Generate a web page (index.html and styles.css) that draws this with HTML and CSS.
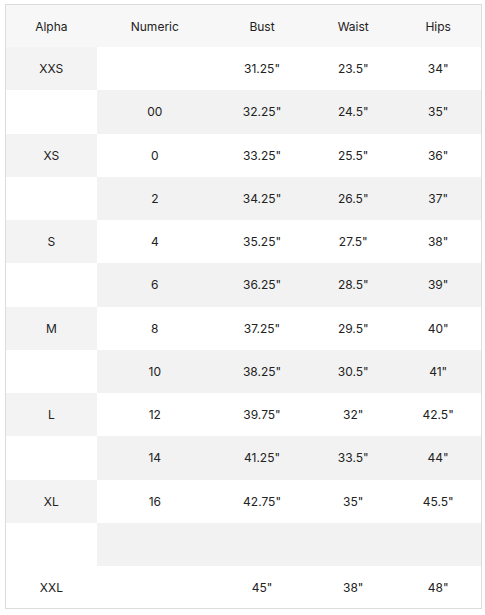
FILE: index.html
```html
<!DOCTYPE html>
<html>
<head>
<meta charset="utf-8">
<link rel="stylesheet" href="styles.css">
</head>
<body>
<div class="wrap">
<table class="size-table">
  <colgroup>
    <col class="c-alpha"><col class="c-num"><col class="c-bust"><col class="c-waist"><col class="c-hips">
  </colgroup>
  <thead>
    <tr class="head"><th>Alpha</th><th>Numeric</th><th>Bust</th><th>Waist</th><th>Hips</th></tr>
  </thead>
  <tbody>
    <tr><td class="g">XXS</td><td></td><td>31.25"</td><td>23.5"</td><td>34"</td></tr>
    <tr class="alt"><td class="w"></td><td>00</td><td>32.25"</td><td>24.5"</td><td>35"</td></tr>
    <tr><td class="g">XS</td><td>0</td><td>33.25"</td><td>25.5"</td><td>36"</td></tr>
    <tr class="alt"><td class="w"></td><td>2</td><td>34.25"</td><td>26.5"</td><td>37"</td></tr>
    <tr><td class="g">S</td><td>4</td><td>35.25"</td><td>27.5"</td><td>38"</td></tr>
    <tr class="alt"><td class="w"></td><td>6</td><td>36.25"</td><td>28.5"</td><td>39"</td></tr>
    <tr><td class="g">M</td><td>8</td><td>37.25"</td><td>29.5"</td><td>40"</td></tr>
    <tr class="alt"><td class="w"></td><td>10</td><td>38.25"</td><td>30.5"</td><td>41"</td></tr>
    <tr><td class="g">L</td><td>12</td><td>39.75"</td><td>32"</td><td>42.5"</td></tr>
    <tr class="alt"><td class="w"></td><td>14</td><td>41.25"</td><td>33.5"</td><td>44"</td></tr>
    <tr><td class="g">XL</td><td>16</td><td>42.75"</td><td>35"</td><td>45.5"</td></tr>
    <tr class="alt"><td class="w"></td><td></td><td></td><td></td><td></td></tr>
    <tr class="last"><td>XXL</td><td></td><td>45"</td><td>38"</td><td>48"</td></tr>
  </tbody>
</table>
</div>
</body>
</html>
```
FILE: styles.css
```css
html, body {
  margin: 0;
  padding: 0;
  background: #ffffff;
}
.wrap {
  padding: 4px 0 0 5px;
}
.size-table {
  width: 477px;
  border-collapse: collapse;
  table-layout: fixed;
  border: 1px solid #dcdcdc;
  font-family: Inter, "Noto Sans", sans-serif;
  font-size: 12px;
  color: #222222;
}
.c-alpha { width: 91px; }
.c-num { width: 116px; }
.c-bust { width: 98px; }
.c-waist { width: 84px; }
.c-hips { width: 86px; }
th, td {
  padding: 0;
  text-align: center;
  vertical-align: middle;
  font-weight: 400;
}
.head th {
  height: 42px;
  background: #f7f7f7;
}
tbody tr td {
  height: 43.25px;
  background: #ffffff;
}
tbody tr.alt td {
  background: #f2f2f2;
}
tbody tr td.g {
  background: #f3f3f3;
}
tbody tr.alt td.w {
  background: #ffffff;
}
tbody tr.last td {
  height: 42px;
}
```
